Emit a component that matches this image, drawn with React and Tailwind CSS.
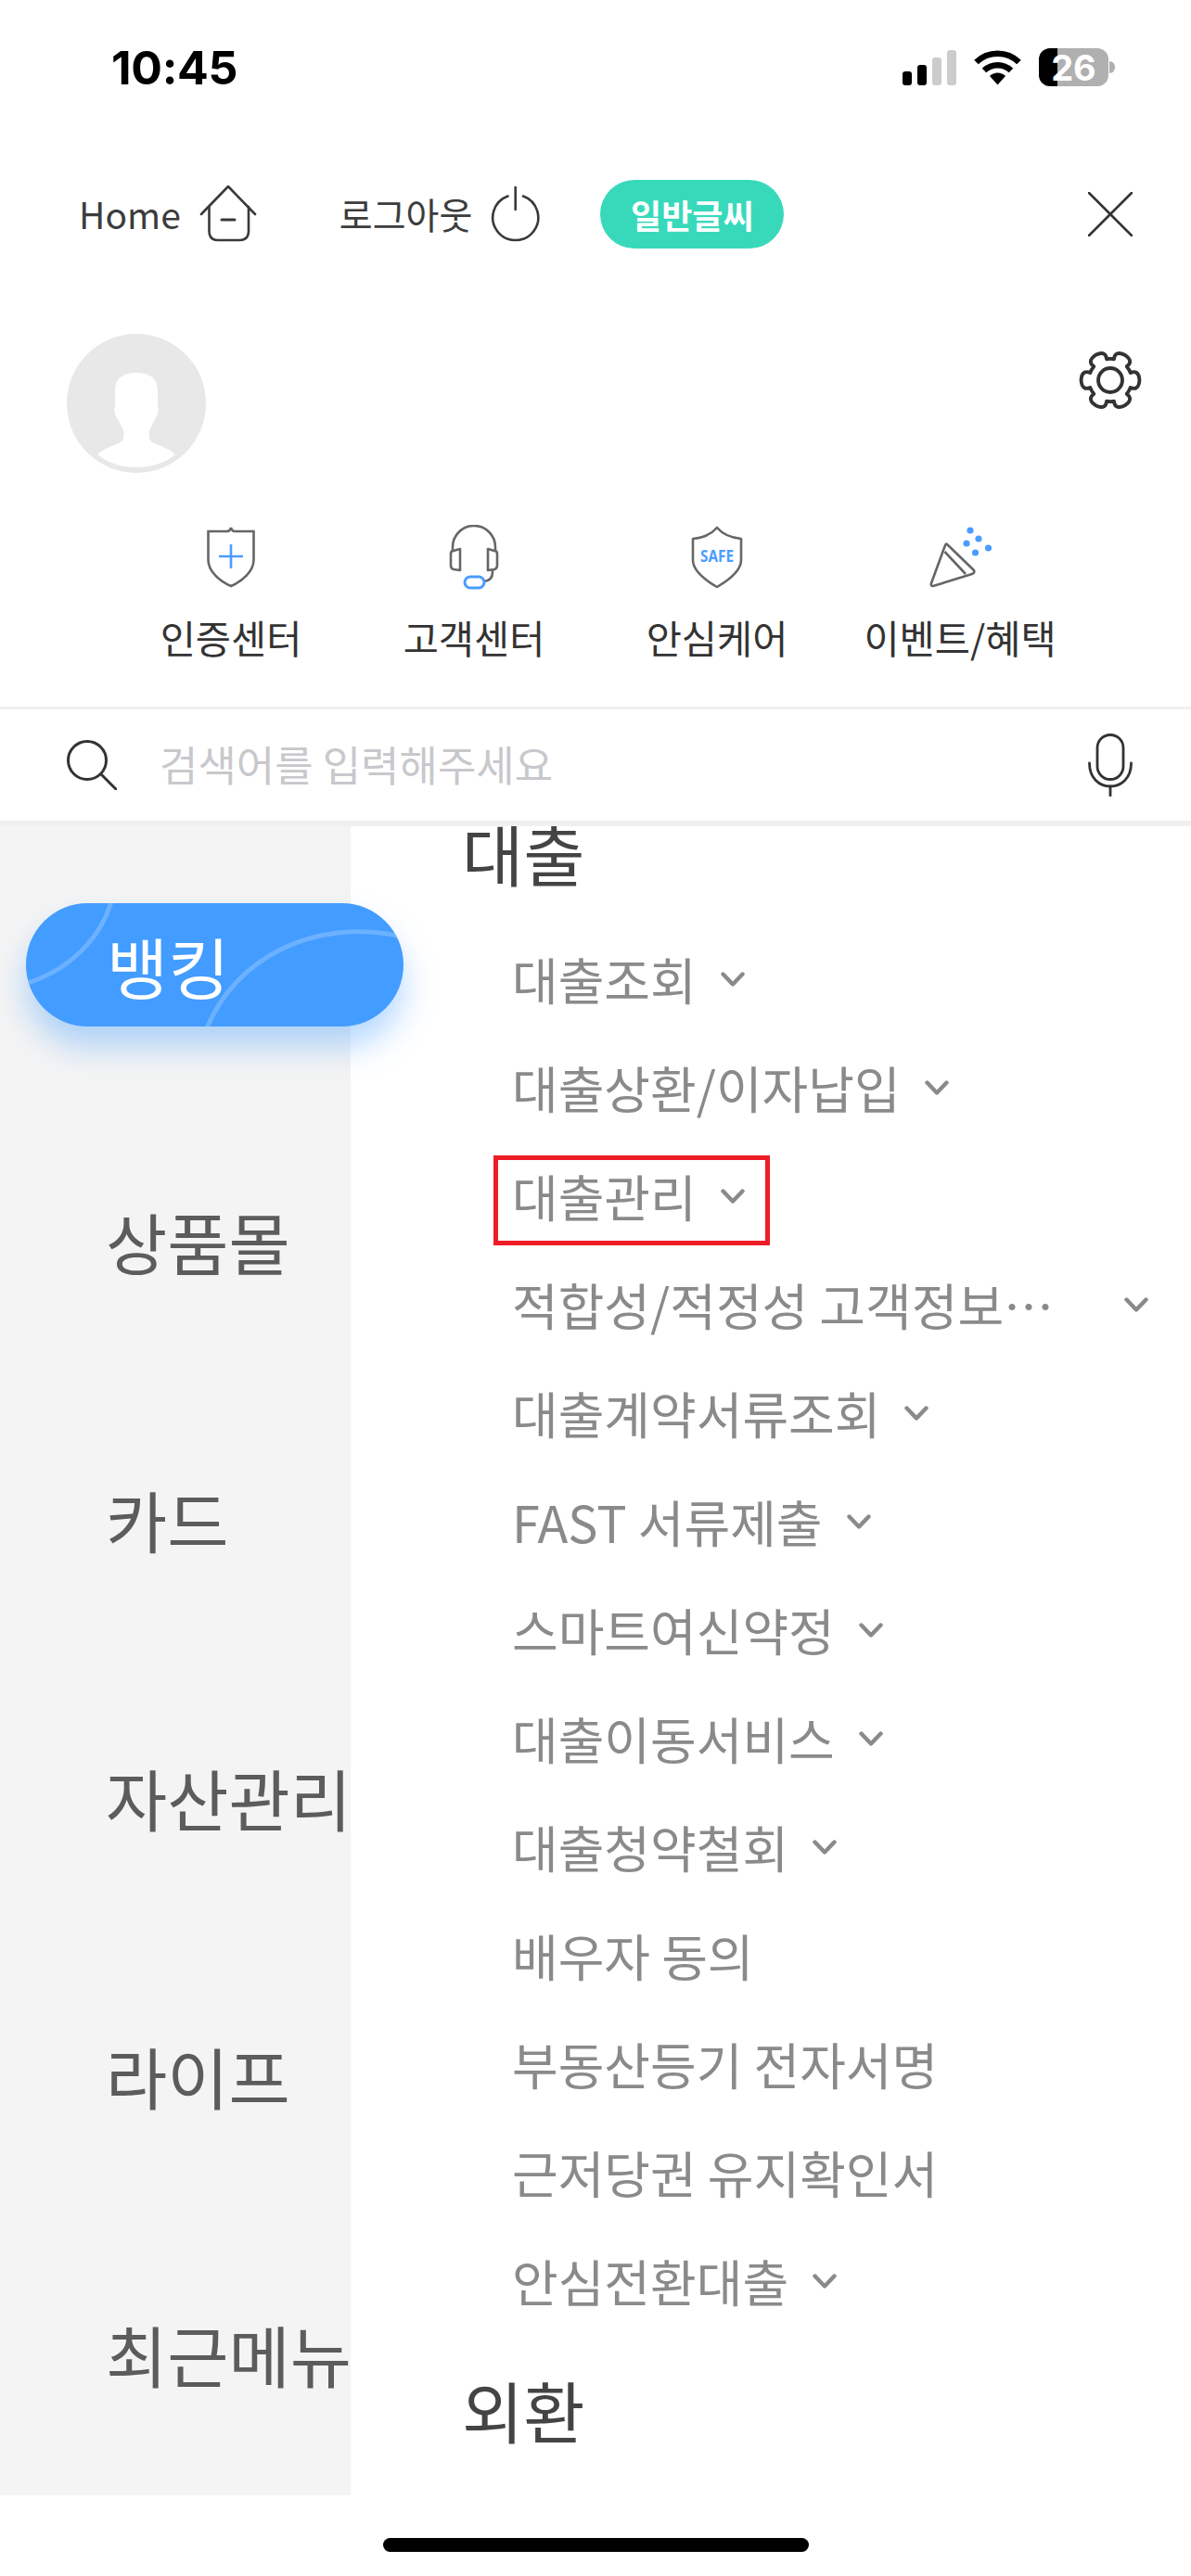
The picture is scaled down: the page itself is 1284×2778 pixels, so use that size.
import React from 'react'

const sideMenus = ['상품몰', '카드', '자산관리', '라이프', '최근메뉴']

const loanMenus = [
  { label: '대출조회', arrow: true },
  { label: '대출상환/이자납입', arrow: true },
  { label: '대출관리', arrow: true, selected: true },
  { label: '적합성/적정성 고객정보…', arrow: true, labelClass: 'w-[634px]' },
  { label: '대출계약서류조회', arrow: true },
  { label: 'FAST 서류제출', arrow: true },
  { label: '스마트여신약정', arrow: true },
  { label: '대출이동서비스', arrow: true },
  { label: '대출청약철회', arrow: true },
  { label: '배우자 동의' },
  { label: '부동산등기 전자서명' },
  { label: '근저당권 유지확인서' },
  { label: '안심전환대출', arrow: true },
]

const polar = (r, deg) => {
  const a = (deg * Math.PI) / 180
  return `${(40 + r * Math.cos(a)).toFixed(2)} ${(40 + r * Math.sin(a)).toFixed(2)}`
}

const gearPath = () => {
  let d = `M${polar(25, -20)}`
  for (let a = 0; a < 360; a += 60) {
    d += ` C${polar(30, a - 21)} ${polar(35, a - 17)} ${polar(34, a)}`
    d += ` C${polar(35, a + 17)} ${polar(30, a + 21)} ${polar(25, a + 20)}`
    d += ` A25 25 0 0 1 ${polar(25, a + 40)}`
  }
  return d + 'Z'
}

const HomeIcon = () => (
  <svg width="62" height="62" viewBox="0 0 62 62" fill="none" stroke="#3a3a3a" strokeWidth="2.6" strokeLinecap="round" strokeLinejoin="round">
    <path d="M2 31 L31 1 L60 31" />
    <path d="M10.5 23 V49 Q10.5 59 20 59 H43 Q53 59 53 49 V23" />
    <path d="M24 37 H38" strokeWidth="3" />
  </svg>
)

const PowerIcon = () => (
  <svg width="56" height="62" viewBox="0 0 56 62" fill="none" stroke="#3a3a3a" strokeWidth="2.6" strokeLinecap="round">
    <path d="M19.5 11.5 A24.5 24.5 0 1 0 36 11.5" />
    <path d="M27.7 2 V26" />
  </svg>
)

const CloseIcon = () => (
  <svg width="48" height="48" viewBox="0 0 48 48" stroke="#333333" strokeWidth="2.6" strokeLinecap="round">
    <path d="M1 1 L47 47 M47 1 L1 47" />
  </svg>
)

const GearIcon = () => (
  <svg width="74" height="74" viewBox="0 0 80 80" fill="none" stroke="#333333" strokeWidth="4.2" strokeLinejoin="round" className="mt-[13px]">
    <path d={gearPath()} />
    <circle cx="40" cy="40" r="14" />
  </svg>
)

const ShieldPlusIcon = () => (
  <svg width="80" height="70" viewBox="0 0 80 70" fill="none" strokeWidth="2.6">
    <path stroke="#666666" d="M15.5 7 H36 Q39 7 40 3 Q41 7 44 7 H64.5 V38 C64.5 50 52 61 40 66 C28 61 15.5 50 15.5 38 Z" />
    <path stroke="#4a9dff" d="M27 34 H53 M40 21 V47" />
  </svg>
)

const HeadsetIcon = () => (
  <svg width="80" height="70" viewBox="0 0 80 70" fill="none" stroke="#666666" strokeWidth="2.6" strokeLinejoin="round">
    <path d="M17 28 V24 A23 23 0 0 1 63 24 V28" />
    <path d="M25 26 V49 L18 48 Q15 47 15 44 V31 Q15 28 18 28 Z" />
    <path d="M55 26 V49 L62 48 Q65 47 65 44 V31 Q65 28 62 28 Z" />
    <path d="M60 49 V51 Q60 60 51 61" />
    <rect x="30" y="56" width="21" height="12" rx="6" stroke="#4a9dff" strokeWidth="3" />
  </svg>
)

const SafeIcon = () => (
  <svg width="80" height="70" viewBox="0 0 80 70" fill="none">
    <path stroke="#666666" strokeWidth="2.6" strokeLinejoin="round" d="M40 3 C34 10 24 14 14 15 V38 C14 50 28 60 40 67 C52 60 66 50 66 38 V15 C56 14 46 10 40 3 Z" />
    <text x="40" y="40" textAnchor="middle" fontSize="17" fontWeight="700" fill="#4a9dff" textLength="36" lengthAdjust="spacingAndGlyphs" fontFamily="'Noto Sans', sans-serif">SAFE</text>
  </svg>
)

const PartyIcon = () => (
  <svg width="80" height="70" viewBox="0 0 80 70" fill="none">
    <path stroke="#666666" strokeWidth="2.6" strokeLinejoin="round" d="M26 21 L55 49 Q56 52 53 53 L11 66 Q8 66 9 63 L24 22 Q25 20 26 21 Z" />
    <path stroke="#666666" strokeWidth="2.6" d="M23.5 29 L46 53" />
    <g fill="#4a9dff">
      <circle cx="51" cy="6" r="3.6" />
      <circle cx="60" cy="15" r="3.6" />
      <circle cx="47" cy="20" r="3.6" />
      <circle cx="70.5" cy="25" r="3.6" />
      <circle cx="56.5" cy="30" r="3.6" />
    </g>
  </svg>
)

const shortcuts = [
  { label: '인증센터', icon: <ShieldPlusIcon /> },
  { label: '고객센터', icon: <HeadsetIcon /> },
  { label: '안심케어', icon: <SafeIcon /> },
  { label: '이벤트/혜택', icon: <PartyIcon /> },
]

const Chevron = () => (
  <svg width="26" height="16" viewBox="0 0 26 16" fill="none" stroke="#8a8a8a" strokeWidth="4.4" strokeLinecap="round" strokeLinejoin="round" className="shrink-0">
    <path d="M2.5 2.5 L13 13.5 L23.5 2.5" />
  </svg>
)

const StatusBar = () => (
  <div className="h-[130px] flex items-start pt-[52px] pl-[120px] pr-[82px] justify-between">
    <span className="font-['Inter',sans-serif] font-bold text-[50px] leading-[42px] text-black tracking-[-0.3px]">10:45</span>
    <div className="flex items-center gap-[19px]">
      <svg width="58" height="38" viewBox="0 0 58 38">
        <rect x="0" y="23" width="10" height="15" rx="3" fill="#000000" />
        <rect x="16" y="16" width="10" height="22" rx="3" fill="#000000" />
        <rect x="32" y="8" width="10" height="30" rx="3" fill="#cccccc" />
        <rect x="48" y="0" width="10" height="38" rx="3" fill="#cccccc" />
      </svg>
      <svg width="51" height="38" viewBox="0 0 51 38" fill="none" stroke="#000000">
        <path strokeWidth="6.5" d="M2.5 13 A33 33 0 0 1 48.5 13" />
        <path strokeWidth="6.5" d="M11 22 A21 21 0 0 1 40 22" />
        <path fill="#000000" stroke="none" d="M17 28 A12 12 0 0 1 34 28 L25.5 37.5 Z" />
      </svg>
      <div className="flex items-center gap-[1px]">
        <div className="relative w-[75px] h-[41px] rounded-[12px] overflow-hidden flex">
          <div className="w-[20px] bg-black" />
          <div className="flex-1 bg-[#b0b0b0]" />
          <span className="absolute inset-0 flex items-center justify-center font-['Inter',sans-serif] font-bold text-[38px] leading-none text-white">26</span>
        </div>
        <div className="w-[6px] h-[13px] rounded-r-full bg-[#b0b0b0]" />
      </div>
    </div>
  </div>
)

const App = () => {
  return (
    <div className="w-[1284px] h-[2778px] bg-white overflow-hidden font-['Noto_Sans_CJK_KR','Noto_Sans',sans-serif]">
      <StatusBar />

      {/* Top links */}
      <div className="h-[76px] mt-[63px] flex items-center pl-[85px] pr-[63px]">
        <span className="text-[39px] text-[#3c3c3c] leading-none -mt-[2px]">Home</span>
        <div className="ml-[20px]"><HomeIcon /></div>
        <span className="ml-[89px] text-[39px] text-[#3c3c3c] leading-none -mt-[2px]">로그아웃</span>
        <div className="ml-[19px]"><PowerIcon /></div>
        <div className="ml-[63px] w-[198px] h-[74px] rounded-full bg-[#38d9bb] flex items-center justify-center text-[36px] font-bold text-white">일반글씨</div>
        <div className="ml-auto"><CloseIcon /></div>
      </div>

      {/* Profile */}
      <div className="mt-[91px] h-[150px] flex items-start justify-between pl-[72px] pr-[50px]">
        <div className="w-[150px] h-[150px] rounded-full bg-[#e8e8e8] overflow-hidden">
          <svg width="150" height="150" viewBox="0 0 150 150">
            <path fill="#ffffff" d="M75 42 C90 42 98 48 98 62 L98 78 C100 84 97 90 95 92 L89 104 C88 112 89 116 94 118 C104 122 112 125 117 130 C105 140 90 144 75 144 C60 144 45 140 33 130 C38 125 46 122 56 118 C61 116 62 112 61 104 L55 92 C53 90 50 84 52 78 L52 62 C52 48 60 42 75 42 Z" />
          </svg>
        </div>
        <GearIcon />
      </div>

      {/* Shortcuts */}
      <div className="mt-[56px] h-[196px] grid grid-cols-4 px-[118px]">
        {shortcuts.map((item) => (
          <div key={item.label} className="flex flex-col items-center">
            {item.icon}
            <span className="mt-[23px] text-[41.5px] leading-[56px] text-[#333333] whitespace-nowrap">{item.label}</span>
          </div>
        ))}
      </div>

      {/* Search */}
      <div className="h-[129px] border-t-[3px] border-b-[6px] border-[#f0f0f0] flex items-center pl-[72px] pr-[63px] box-border">
        <svg width="54" height="54" viewBox="0 0 54 54" fill="none" stroke="#333333" strokeWidth="3" strokeLinecap="round">
          <circle cx="22" cy="22" r="20.5" />
          <path d="M37 37 L53 53" />
        </svg>
        <span className="ml-[46px] -mt-[4px] text-[45px] text-[#c8c8cc] leading-none">검색어를 입력해주세요</span>
        <svg width="48" height="68" viewBox="0 0 48 68" fill="none" stroke="#333333" strokeWidth="2.8" strokeLinecap="round" className="ml-auto">
          <rect x="10" y="1.5" width="28" height="48" rx="14" />
          <path d="M1.5 32 C1.5 48 12 57 24 57 C36 57 46.5 48 46.5 32" />
          <path d="M24 57 V67" />
        </svg>
      </div>

      <div className="flex h-[1800px]">
        {/* Side categories */}
        <div className="w-[378px] shrink-0 bg-[#f4f4f4] pt-[83px]">
          <div className="relative z-10 ml-[28px] w-[407px] h-[133px] rounded-full bg-[#439cff] shadow-[0_22px_34px_rgba(67,156,255,0.38)] overflow-hidden flex items-center pl-[87px]">
            <svg width="407" height="133" viewBox="0 0 407 133" fill="none" stroke="#ffffff" strokeOpacity="0.22" strokeWidth="5" className="absolute left-0 top-0">
              <path d="M92 -2 C80 40 45 72 2 86" />
              <path d="M195 135 C225 60 310 15 405 36" />
            </svg>
            <span className="relative text-[72px] leading-none text-white">뱅킹</span>
          </div>
          <div className="mt-[181px] flex flex-col gap-[200px] pl-[114px]">
            {sideMenus.map((name) => (
              <div key={name} className="h-[100px] flex items-center text-[72px] text-[#5c5c5c] whitespace-nowrap">{name}</div>
            ))}
          </div>
        </div>

        {/* Menu list */}
        <div className="flex-1 min-w-0 overflow-hidden pl-[120px]">
          <div className="-mt-[22px] h-[100px] flex items-center text-[72px] text-[#444444]">대출</div>
          <div className="mt-[28px] flex flex-col">
            {loanMenus.map((item) => (
              <div key={item.label} className="h-[117px] pl-[54px] flex items-center">
                <div className={item.selected ? 'relative flex items-center gap-[26px]' : 'flex items-center gap-[26px]'}>
                  <span className={`text-[54px] text-[#8a8a8a] leading-none whitespace-nowrap ${item.labelClass || ''}`}>{item.label}</span>
                  {item.arrow && <Chevron />}
                  {item.selected && <div className="absolute -left-[20px] -top-[17px] w-[298px] h-[97px] border-[5px] border-[#ee1c25]" />}
                </div>
              </div>
            ))}
          </div>
          <div className="mt-[30px] h-[100px] flex items-center text-[72px] text-[#444444]">외환</div>
        </div>
      </div>

      {/* Home indicator */}
      <div className="mt-[46px] mx-auto w-[459px] h-[15px] rounded-full bg-black" />
    </div>
  )
}

export default App
